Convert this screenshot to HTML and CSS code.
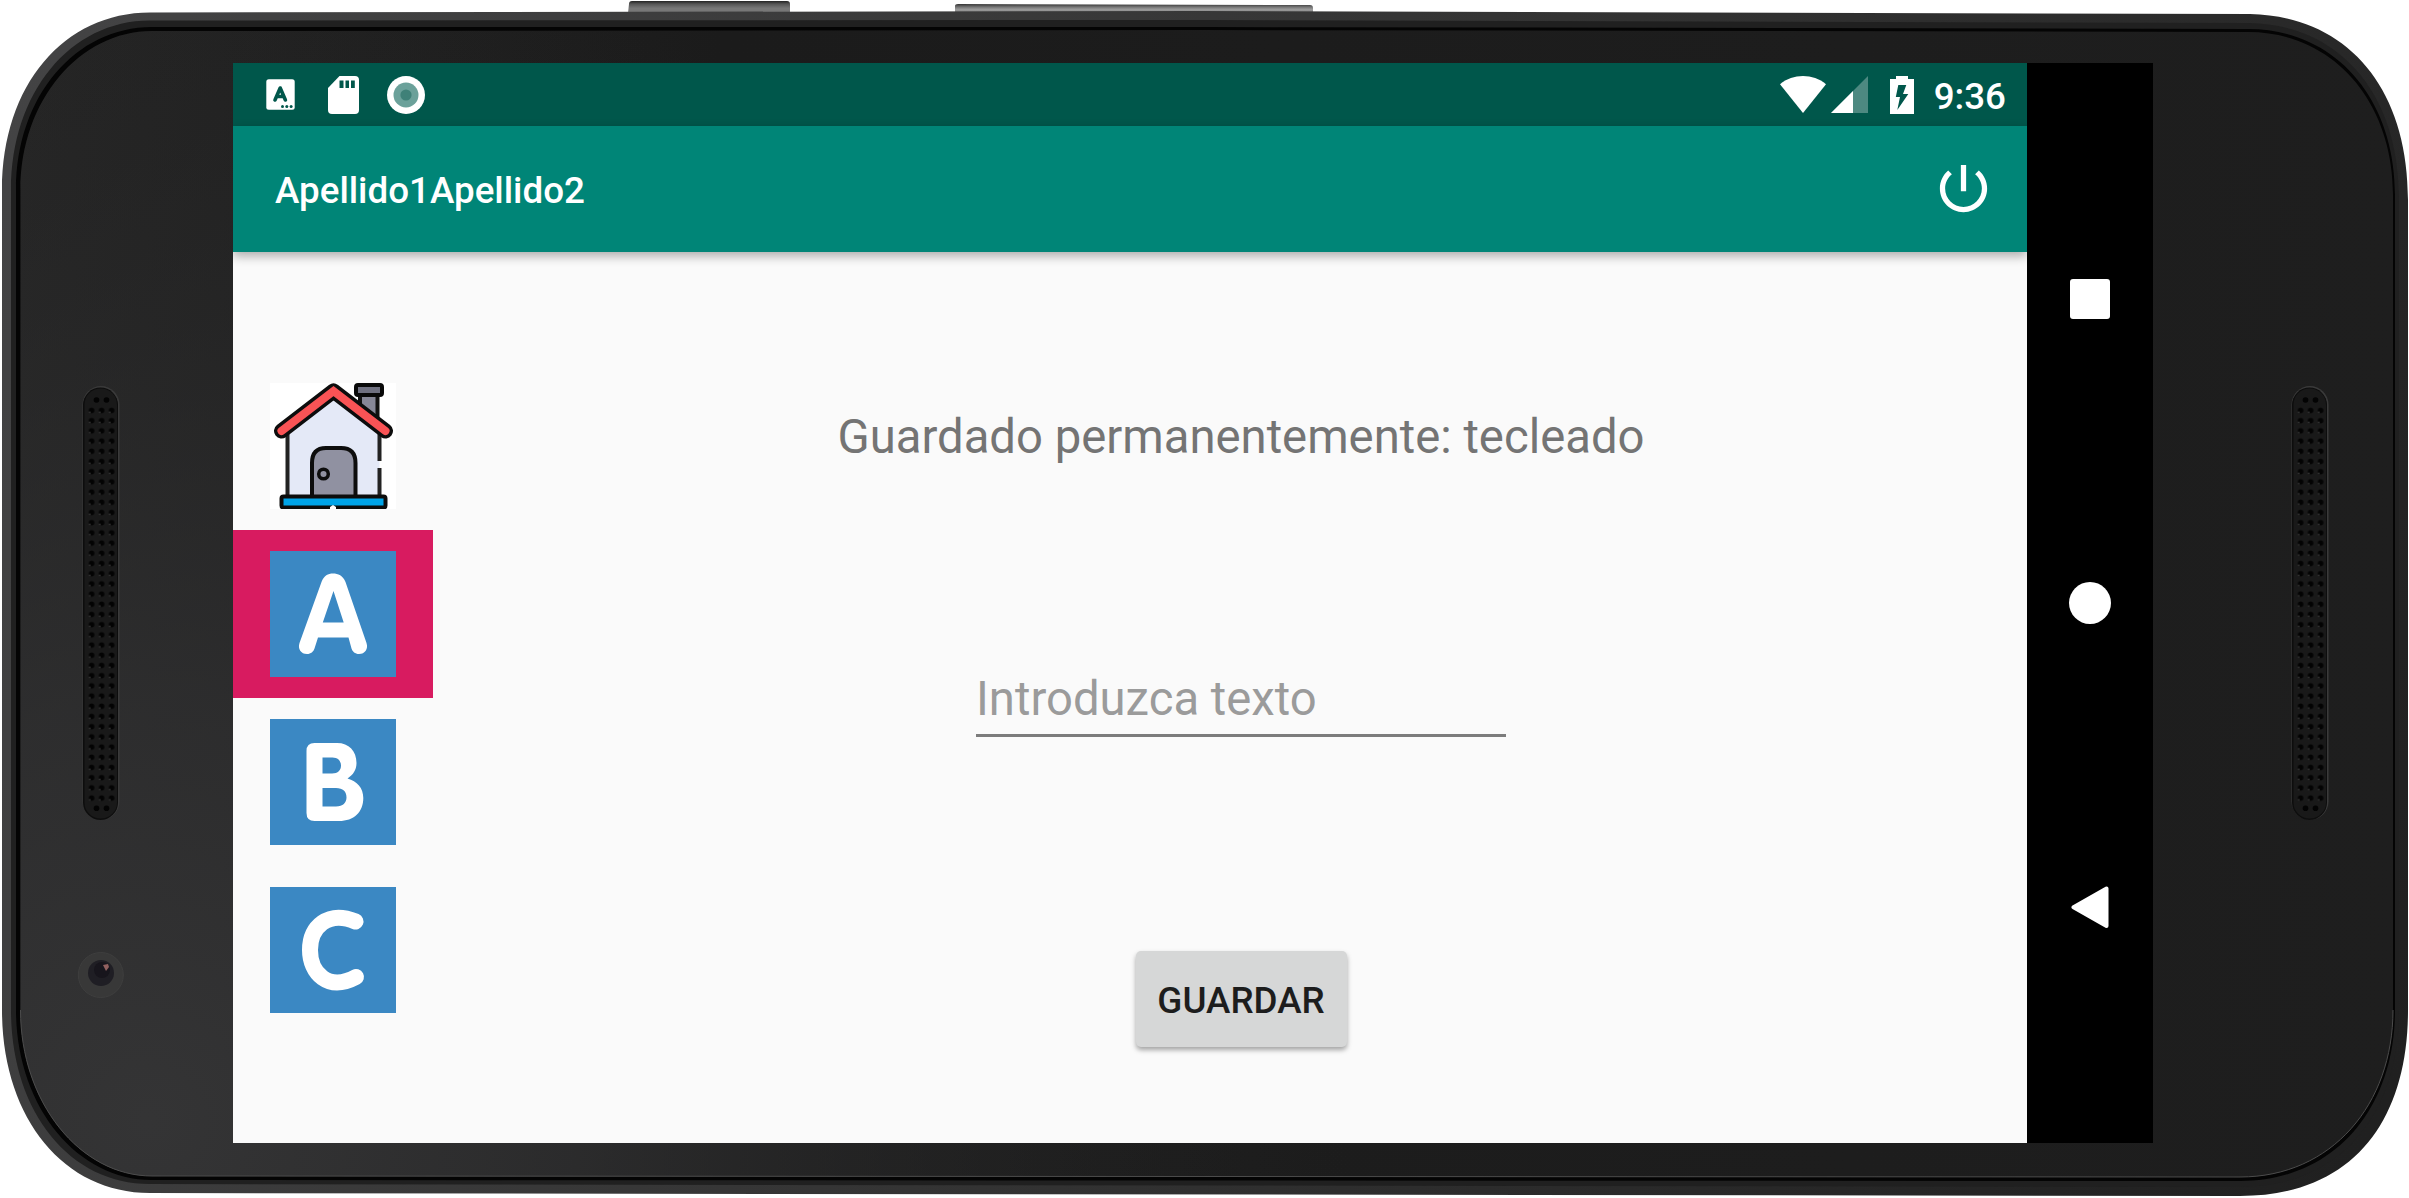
FILE: index.html
```html
<!DOCTYPE html>
<html lang="es">
<head>
<meta charset="utf-8">
<title>Apellido1Apellido2</title>
<link rel="stylesheet" href="styles.css">
</head>
<body>
<div class="device">
  <svg class="frame" viewBox="0 0 2409 1198" aria-hidden="true">
    <defs>
      <linearGradient id="glass" x1="0" y1="0" x2="2409" y2="0" gradientUnits="userSpaceOnUse">
        <stop offset="0" stop-color="#252525"/><stop offset=".3" stop-color="#1b1b1b"/><stop offset="1" stop-color="#1e1e1e"/>
      </linearGradient>
      <radialGradient id="sheen" cx="150" cy="1120" r="1200" gradientUnits="userSpaceOnUse">
        <stop offset="0" stop-color="#353536" stop-opacity=".95"/><stop offset=".35" stop-color="#303031" stop-opacity=".75"/><stop offset="1" stop-color="#252525" stop-opacity="0"/>
      </radialGradient>
      <linearGradient id="rim" x1="0" y1="0" x2="2409" y2="1198" gradientUnits="userSpaceOnUse">
        <stop offset="0" stop-color="#444445"/><stop offset=".5" stop-color="#343434"/><stop offset="1" stop-color="#1f1f1f"/>
      </linearGradient>
      <linearGradient id="key" x1="0" y1="0" x2="0" y2="1">
        <stop offset="0" stop-color="#222"/><stop offset=".25" stop-color="#555"/><stop offset=".6" stop-color="#777"/><stop offset="1" stop-color="#777"/>
      </linearGradient>
      <linearGradient id="longkey" x1="0" y1="0" x2="0" y2="1">
        <stop offset="0" stop-color="#333"/><stop offset=".35" stop-color="#777"/><stop offset=".6" stop-color="#999"/><stop offset="1" stop-color="#888"/>
      </linearGradient>
      <pattern id="holes" width="10" height="10.2" patternUnits="userSpaceOnUse" x="3.6" y="18.9">
        <circle cx="5" cy="5.1" r="2.8" fill="#030303"/><circle cx="3.2" cy="6.8" r=".8" fill="#3c3c3c"/>
      </pattern>
      <g id="speaker">
        <rect x="-.5" y="-.5" width="37" height="434" rx="18.5" fill="#3a3a3a"/>
        <rect x="0" y="1" width="35" height="432.500" rx="17.5" fill="#0d0d0d"/>
        <rect x="1.500" y="2" width="32.500" height="430" rx="16" fill="#191919"/>
        <rect x="3.600" y="18.900" width="30" height="397.800" fill="url(#holes)"/>
        <g fill="#030303"><circle cx="13.500" cy="13.500" r="2.800"/><circle cx="23.500" cy="13.500" r="2.800"/><circle cx="13.500" cy="421.800" r="2.800"/><circle cx="23.500" cy="421.800" r="2.800"/></g>
      </g>
      <path id="face" d="M152 31 L1200 30 L2248 32 C2332 32 2393 100 2393 195 V1010 C2393 1104 2332 1177 2240 1177 L152 1176 C80 1176 20.500 1102 20.500 1010 V190 C20.500 100 80 31 152 31Z"/>
    </defs>
    <path d="M628 13l1-9q0-3 3-3h155q3 0 3 3v9z" fill="url(#key)"/>
    <path d="M955 13V6q0-2 3-2l352 1q3 0 3 3v5z" fill="url(#longkey)"/>
    <path d="M150 12.500 L1200 11 L2250 14 C2345 16 2408 85 2408 200 V1010 C2408 1122 2352 1196 2240 1196 L150 1193 C62 1193 2 1116 2 1010 V190 C2 85 64 12.500 150 12.500Z" fill="url(#rim)"/>
    <path d="M150 20.500 L1200 20 L2248 23 C2338 24 2399 92 2399 198 V1010 C2399 1114 2341 1187 2240 1187 L150 1184 C68 1184 11 1110 11 1010 V190 C11 93 70 20.500 150 20.500Z" fill="#202020"/>
    <path d="M152 27 L1200 27 L2248 29 C2334 29 2395 97 2395 195 V1010 C2395 1108 2335 1181 2240 1181 L152 1180 C76 1180 16 1105 16 1010 V190 C16 96 76 27 152 27Z" fill="#040404"/>
    <use href="#face" fill="url(#glass)"/>
    <use href="#face" fill="url(#sheen)"/>
    <path d="M2393 1010 C2393 1104 2332 1177 2240 1177 L152 1176 C80 1176 20.500 1102 20.500 1010" fill="none" stroke="#4c4c4c" stroke-width="1"/>
    <use href="#speaker" x="83" y="386.500"/>
    <use href="#speaker" x="2292" y="386.500"/>
    <circle cx="100.800" cy="975" r="22.500" fill="#383838" stroke="#3e3e3e"/>
    <circle cx="101" cy="973" r="13" fill="#1f1e24"/>
    <circle cx="102" cy="970" r="8" fill="#17151c"/>
    <path d="M103 965l5-1 1 3-3 4z" fill="#91605f"/>
  </svg>

  <div class="screen">
    <div class="app">
      <div class="status">
        <svg class="s-key" width="29" height="31" viewBox="0 0 29 31"><rect x=".3" y=".3" width="28.400" height="30.400" rx="2.500" fill="#fff"/><path d="M9 21L14.200 9 19.400 21M10.800 17.500H17.600" fill="none" stroke="#00574b" stroke-width="3.600" stroke-linecap="round" stroke-linejoin="round"/><g fill="#00574b"><circle cx="16.500" cy="27.500" r="1.500"/><circle cx="20.800" cy="27.500" r="1.500"/><circle cx="25.100" cy="27.500" r="1.500"/></g></svg>
        <svg class="s-sd" width="31" height="38" viewBox="0 0 31 38"><path d="M11.500 0H27q4 0 4 4V34q0 4-4 4H4q-4 0-4-4V12z" fill="#fff"/><path d="M11.500 4.500h4v7.500h-4zM17.500 4.500h3.500v7.500h-3.500zM23 4.500h3.800v7.500H23z" fill="#00574b"/></svg>
        <svg class="s-dot" width="38" height="38" viewBox="0 0 38 38"><circle cx="19" cy="19" r="19" fill="#fff"/><circle cx="19" cy="19" r="12.500" fill="#6ba19a"/><circle cx="19" cy="19" r="5.600" fill="#3f8178"/></svg>
        <span class="spacer"></span>
        <svg class="s-wifi" width="46" height="37" viewBox="0 0 46 37"><path d="M23 37L0 8.200C13-2.700 33-2.700 46 8.200z" fill="#fff"/></svg>
        <svg class="s-cell" width="37" height="37" viewBox="0 0 37 37"><path d="M37 0V37H0z" fill="#4d8981"/><path d="M22 15V37H0z" fill="#fff"/></svg>
        <svg class="s-bat" width="24" height="38" viewBox="0 0 24 38"><path d="M6 0h12v3h6v35H0V3h6z" fill="#fff"/><path d="M8.300 9H16.300L13 18h5.300L7.300 34 10 21H5.800z" fill="#00574b"/></svg>
        <span class="clock">9:36</span>
      </div>
      <header class="bar">
        <h1 class="title">Apellido1Apellido2</h1>
        <svg class="power" width="63" height="63" viewBox="0 0 24 24"><path fill="#fff" d="M13 3h-2v10h2V3zm4.830 2.170l-1.420 1.420C17.990 7.860 19 9.810 19 12c0 3.870-3.130 7-7 7s-7-3.130-7-7c0-2.190 1.010-4.140 2.580-5.420L6.170 5.170C4.230 6.820 3 9.260 3 12c0 4.970 4.030 9 9 9s9-4.030 9-9c0-2.740-1.230-5.180-3.170-6.830z"/></svg>
      </header>
      <div class="content">
        <nav class="tabs">
          <div class="tab">
            <svg class="tile" viewBox="0 0 126 126"><rect width="126" height="126" fill="#fff"/>
              <path d="M90 8V24L107.500 38V10" fill="#868797" stroke="#111" stroke-width="4"/>
              <rect x="86" y="2" width="26" height="10" rx="2" fill="#6f7080" stroke="#090909" stroke-width="4"/>
              <path d="M17.500 50L63.500 13 109.500 50V115H17.500z" fill="#e4e9f7"/>
              <path d="M17.500 48V115M109.500 48V78M109.500 85V115" stroke="#222" stroke-width="4"/>
              <path d="M11.500 48L63.500 8 115.500 48" fill="none" stroke="#0d0d0d" stroke-width="15" stroke-linecap="round" stroke-linejoin="round"/>
              <path d="M11.500 48L63.500 8 115.500 48" fill="none" stroke="#f95355" stroke-width="8" stroke-linecap="round" stroke-linejoin="miter"/>
              <path d="M42 115V80Q42 65 56 65H71Q85.500 65 85.500 80V115" fill="#9091a1" stroke="#0d0d0d" stroke-width="4"/>
              <circle cx="53.500" cy="91" r="4.800" fill="#9091a1" stroke="#0d0d0d" stroke-width="3.500"/>
              <rect x="11.500" y="113.500" width="104" height="11" rx="2" fill="#00a4e8" stroke="#0d0d0d" stroke-width="4"/>
              <path d="M60 126v-2l3-2 3 2v2z" fill="#fff"/>
            </svg>
          </div>
          <div class="tab active">
            <svg class="tile" viewBox="0 0 126 126"><rect width="126" height="126" fill="#3b88c3"/><path fill="#fff" fill-rule="evenodd" d="M51.500 31C54 24.500 58 22.500 63 22.500S73 24.500 75.500 31L96.500 92C98.500 98 95 103 89 103 85 103 82.500 100.500 81.500 97.500L78.500 86.500H48L44.500 97.500C43.500 100.500 41 103 37 103 31 103 27.500 98 29.500 92ZM63.500 40L52.800 71.500H73.700Z"/></svg>
          </div>
          <div class="tab">
            <svg class="tile" viewBox="0 0 126 126"><rect width="126" height="126" fill="#3b88c3"/><path fill="#fff" fill-rule="evenodd" d="M36.500 32Q36.500 24 44.500 24H67C79 24 86.500 32 86.500 44 86.500 51 83 56 77.500 59.500 87 62 93.300 69 93.300 79 93.300 93 84 102 69 102H44.500Q36.500 102 36.500 94ZM52.500 38.500V54.500H62C68 54.500 71 51 71 46.500 71 42 68 38.500 62.500 38.500ZM52.500 69V87.500H66C73 87.500 76.500 83.500 76.500 78.500 76.500 72.500 73 69 66 69Z"/></svg>
          </div>
          <div class="tab">
            <svg class="tile" viewBox="0 0 126 126"><rect width="126" height="126" fill="#3b88c3"/><path d="M85.500 34.500C58 23 40 40 40 63S58 105 86 90" fill="none" stroke="#fff" stroke-width="16" stroke-linecap="round"/></svg>
          </div>
        </nav>
        <main class="form">
          <p class="saved">Guardado permanentemente: tecleado</p>
          <div class="field">Introduzca texto</div>
          <button class="save">GUARDAR</button>
        </main>
      </div>
    </div>
    <div class="navbar">
      <svg width="42" height="42" viewBox="0 0 42 42"><rect x="1" y="1" width="40" height="40" rx="3" fill="#fff"/></svg>
      <svg width="42" height="42" viewBox="0 0 42 42"><circle cx="21" cy="21" r="21" fill="#fff"/></svg>
      <svg width="42" height="42" viewBox="0 0 42 42"><path d="M4.500 21.300L37.500 2.500V40z" fill="#fff" stroke="#fff" stroke-width="4" stroke-linejoin="round"/></svg>
    </div>
  </div>
</div>
</body>
</html>
```
FILE: styles.css
```css
* { box-sizing: border-box; }
body { margin: 0; background: #fff; font-family: Roboto, sans-serif; overflow: hidden; }
svg { display: block; flex: none; }
.device { position: relative; width: 2409px; height: 1198px; padding: 63px 256px 55px 233px; }
.frame { position: absolute; inset: 0; width: 2409px; height: 1198px; }
.screen { position: relative; display: flex; width: 1920px; height: 1080px; }
.app { display: flex; flex-direction: column; width: 1794px; background: #fafafa; overflow: hidden; }
.status { display: flex; align-items: center; height: 63px; flex: none; padding: 0 21px 0 33px; background: #00574b; color: #fff; }
.s-sd { margin-left: 33px; }
.s-dot { margin-left: 28px; }
.spacer { flex: 1; }
.s-cell { margin-left: 5px; }
.s-bat { margin-left: 22px; }
.clock { margin-left: 20px; font-size: 36.75px; font-weight: 500; line-height: 63px; padding-top: 3px; }
.bar { display: flex; align-items: center; justify-content: space-between; flex: none; height: 126px; padding: 0 32px 0 42px; background: #008577; color: #fff; box-shadow: 0 4px 10px rgba(0, 0, 0, .32); }
.title { margin: 0; padding-top: 3px; font-size: 36.75px; font-weight: 500; line-height: 44px; }
.power { margin-bottom: 1px; }
.content { display: flex; align-items: center; flex: 1; }
.tabs { width: 200px; flex: none; }
.tab { height: 168px; padding: 21px 37px; }
.tab.active { background: #d81b60; }
.tile { width: 126px; height: 126px; }
.form { display: flex; flex-direction: column; align-items: center; align-self: stretch; flex: 1; padding: 157px 0 0 22px; }
.saved { margin: 0; font-size: 47.25px; line-height: 56px; color: #747474; }
.field { width: 530px; height: 80px; margin-top: 192px; padding-top: 14px; font-size: 47.25px; line-height: 56px; color: #9b9b9b; border-bottom: 3px solid #7c7c7c; margin-bottom: 214px; }
.save { width: 211px; height: 96px; padding: 3px 0 0; border: 0; border-radius: 5px; background: #d6d7d7; color: #1d1d1d; font: 500 36.75px/44px Roboto, sans-serif; box-shadow: 0 3px 5px rgba(0, 0, 0, .35); }
.navbar { display: flex; flex-direction: column; align-items: center; gap: 262px; width: 126px; padding-top: 215px; background: #000; }
```
